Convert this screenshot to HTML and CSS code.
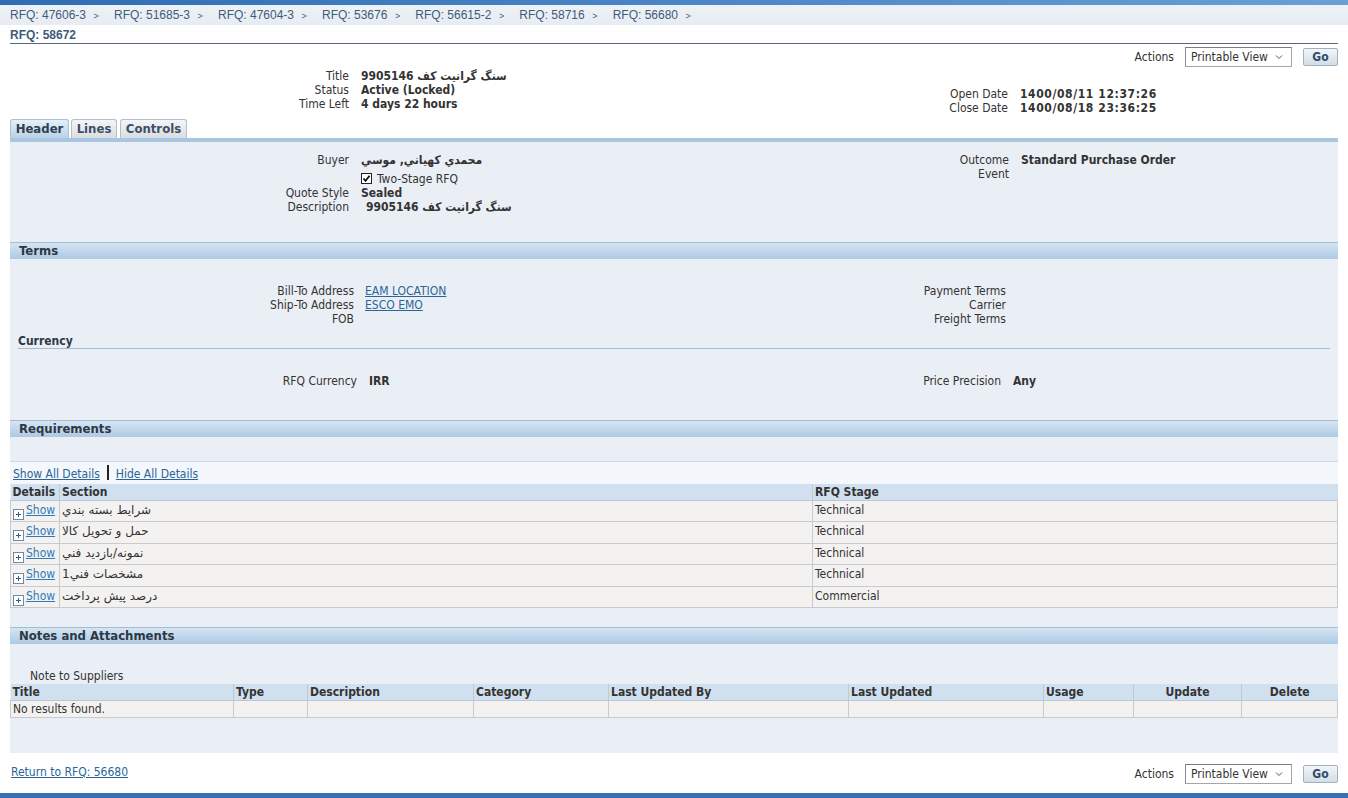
FILE: index.html
```html
<!DOCTYPE html>
<html>
<head>
<meta charset="utf-8">
<title>RFQ: 58672</title>
<link rel="stylesheet" href="styles.css">
</head>
<body>
<div class="topbar"></div>
<div class="crumbs">
  <a class="crumb">RFQ: 47606-3</a>
  <a class="crumb">RFQ: 51685-3</a>
  <a class="crumb">RFQ: 47604-3</a>
  <a class="crumb">RFQ: 53676</a>
  <a class="crumb">RFQ: 56615-2</a>
  <a class="crumb">RFQ: 58716</a>
  <a class="crumb">RFQ: 56680</a>
</div>
<div class="page">
  <div class="pagetitle">RFQ: 58672</div>
  <div class="actions">
    <span class="actions-label">Actions</span>
    <div class="select"><span>Printable View</span><svg class="chev" width="8" height="6" viewBox="0 0 8 6"><path d="M1 1.5 L4 4.5 L7 1.5" fill="none" stroke="#555" stroke-width="1"/></svg></div>
    <button class="go">Go</button>
  </div>

  <div class="info">
    <div class="form form-top-left">
      <span class="lbl">Title</span><span class="val">سنگ گرانیت کف 9905146</span>
      <span class="lbl">Status</span><span class="val">Active (Locked)</span>
      <span class="lbl">Time Left</span><span class="val">4 days 22 hours</span>
    </div>
    <div class="form form-top-right">
      <span class="lbl">Open Date</span><span class="val num">1400/08/11 12:37:26</span>
      <span class="lbl">Close Date</span><span class="val num">1400/08/18 23:36:25</span>
    </div>
  </div>

  <div class="tabs">
    <div class="tab tab-active tab-header">Header</div>
    <div class="tab tab-lines">Lines</div>
    <div class="tab tab-controls">Controls</div>
  </div>

  <div class="panel">
    <div class="header-sec">
      <div class="form form-hl">
        <span class="lbl">Buyer</span><span class="val">محمدي كهياني, موسي</span>
        <span class="lbl"></span><span class="chkrow"><span class="chk"><svg width="9" height="9" viewBox="0 0 9 9"><path d="M1.5 4.5 L3.5 6.8 L7.6 1.8" fill="none" stroke="#111" stroke-width="1.8"/></svg></span>Two-Stage RFQ</span>
        <span class="lbl">Quote Style</span><span class="val">Sealed</span>
        <span class="lbl">Description</span><span class="val val-desc">سنگ گرانیت کف 9905146</span>
      </div>
      <div class="form form-hr">
        <span class="lbl">Outcome</span><span class="val">Standard Purchase Order</span>
        <span class="lbl">Event</span><span class="val"></span>
      </div>
    </div>

    <div class="sechead">Terms</div>
    <div class="terms">
      <div class="form form-tl">
        <span class="lbl">Bill-To Address</span><a class="link">EAM LOCATION</a>
        <span class="lbl">Ship-To Address</span><a class="link">ESCO EMO</a>
        <span class="lbl">FOB</span><span class="val"></span>
      </div>
      <div class="form form-tr">
        <span class="lbl">Payment Terms</span><span class="val"></span>
        <span class="lbl">Carrier</span><span class="val"></span>
        <span class="lbl">Freight Terms</span><span class="val"></span>
      </div>
    </div>
    <div class="subhead">Currency</div>
    <div class="currency">
      <div class="form form-cl">
        <span class="lbl">RFQ Currency</span><span class="val">IRR</span>
      </div>
      <div class="form form-cr">
        <span class="lbl">Price Precision</span><span class="val">Any</span>
      </div>
    </div>

    <div class="sechead">Requirements</div>
    <div class="showall"><a class="link">Show All Details</a><span class="sep"></span><a class="link">Hide All Details</a></div>
    <table class="grid req">
      <colgroup><col class="c-det"><col class="c-sec"><col></colgroup>
      <thead><tr><th>Details</th><th>Section</th><th>RFQ Stage</th></tr></thead>
      <tbody>
        <tr><td><span class="plus"></span><a class="show">Show</a></td><td class="fa">شرايط بسته بندي</td><td>Technical</td></tr>
        <tr><td><span class="plus"></span><a class="show">Show</a></td><td class="fa">حمل و تحويل كالا</td><td>Technical</td></tr>
        <tr><td><span class="plus"></span><a class="show">Show</a></td><td class="fa">نمونه/بازديد فني</td><td>Technical</td></tr>
        <tr><td><span class="plus"></span><a class="show">Show</a></td><td class="fa">مشخصات فني1</td><td>Technical</td></tr>
        <tr><td><span class="plus"></span><a class="show">Show</a></td><td class="fa">درصد پيش پرداخت</td><td>Commercial</td></tr>
      </tbody>
    </table>

    <div class="sechead sechead-notes">Notes and Attachments</div>
    <div class="note-label">Note to Suppliers</div>
    <table class="grid notes">
      <colgroup><col class="n1"><col class="n2"><col class="n3"><col class="n4"><col class="n5"><col class="n6"><col class="n7"><col class="n8"><col></colgroup>
      <thead><tr><th>Title</th><th>Type</th><th>Description</th><th>Category</th><th>Last Updated By</th><th>Last Updated</th><th>Usage</th><th class="ctr">Update</th><th class="ctr">Delete</th></tr></thead>
      <tbody><tr><td>No results found.</td><td></td><td></td><td></td><td></td><td></td><td></td><td></td><td></td></tr></tbody>
    </table>
  </div>

  <div class="footer">
    <a class="link">Return to RFQ: 56680</a>
    <div class="actions actions-bottom">
      <span class="actions-label">Actions</span>
      <div class="select"><span>Printable View</span><svg class="chev" width="8" height="6" viewBox="0 0 8 6"><path d="M1 1.5 L4 4.5 L7 1.5" fill="none" stroke="#555" stroke-width="1"/></svg></div>
      <button class="go">Go</button>
    </div>
  </div>
</div>
<div class="bottombar"></div>
</body>
</html>
```
FILE: styles.css
```css
* { box-sizing: border-box; }
body {
  margin: 0;
  font-family: Tahoma, "DejaVu Sans Condensed", "DejaVu Sans", sans-serif;
  font-size: 12px;
  line-height: 14px;
  color: #333;
  background: #fff;
}
a { cursor: pointer; }
.topbar {
  height: 5px;
  background: linear-gradient(90deg, #2f6cb4 0%, #4a85c6 50%, #6aa0d6 100%);
}
.crumbs {
  display: flex;
  align-items: center;
  height: 20px;
  padding: 1px 0 0 10px;
  background: linear-gradient(#eef2f7, #e6ecf2);
  font-family: "Liberation Sans", Arial, sans-serif;
  font-size: 12px;
  color: #3d5b7b;
}
.crumb { margin-right: 15.2px; white-space: nowrap; }
.crumb::after { content: ">"; font-size: 9px; margin-left: 7.5px; }
.page { padding: 0 10px; }
.pagetitle {
  font-family: "Liberation Sans", Arial, sans-serif;
  font-weight: bold;
  font-size: 12px;
  color: #3d5b7b;
  padding-top: 3px;
  height: 19px;
  border-bottom: 1px solid #566a7c;
}
.actions {
  display: flex;
  justify-content: flex-end;
  align-items: center;
  margin-top: 3px;
  height: 20px;
}
.actions-label { margin-right: 11px; color: #333; }
.select {
  width: 107px;
  height: 20px;
  border: 1px solid #a6a6a6;
  border-top-color: #7c7c7c;
  border-left-color: #8c8c8c;
  background: #fff;
  display: flex;
  align-items: center;
  justify-content: space-between;
  padding: 0 8px 0 5px;
  color: #333;
}
.chev { display: block; }
.go {
  margin-left: 11px;
  width: 35px;
  height: 18px;
  padding: 0;
  font-family: inherit;
  font-weight: bold;
  font-size: 12px;
  color: #2d4d6d;
  border: 1px solid #9fb0bf;
  border-radius: 2px;
  background: linear-gradient(#f3f6f9, #d2dde7);
}
.form {
  display: grid;
  column-gap: 12px;
  grid-auto-rows: 14px;
  align-content: start;
}
.form .lbl { text-align: right; color: #333; white-space: nowrap; }
.form .val { font-weight: bold; color: #333; white-space: nowrap; }
.form .num { letter-spacing: 0.6px; }
.info { display: flex; margin-top: 2px; height: 50px; }
.form-top-left { grid-template-columns: 339px auto; width: 650px; }
.form-top-right { grid-template-columns: 348px auto; padding-top: 18px; }
.tabs {
  display: flex;
  height: 19px;
}
.tab {
  height: 19px;
  font-weight: bold;
  font-size: 13px;
  line-height: 18px;
  text-align: center;
  color: #3c5068;
  border: 1px solid #b4bfca;
  border-bottom: none;
  border-radius: 3px 3px 0 0;
  background: linear-gradient(#f4f5f6, #d9dee3);
}
.tab-header { width: 59px; margin-right: 2px; }
.tab-lines { width: 46px; margin-right: 3px; }
.tab-controls { width: 67px; }
.tab-active {
  color: #2f3f4f;
  border-color: #a8c2da;
  background: linear-gradient(#e6eff7, #b9d2e8);
}
.panel {
  background: #eaeff5;
  border-top: 4px solid #a9c5df;
  padding-bottom: 35px;
}
.header-sec { display: flex; padding-top: 11px; height: 100px; }
.form-hl { grid-template-columns: 339px auto; width: 650px; grid-template-rows: 14px 19px 14px 14px; }
.form-hr { grid-template-columns: 349px auto; }
.chkrow { display: flex; align-items: center; padding-top: 4px; color: #333; }
.chk {
  width: 11px; height: 11px;
  border: 1px solid #222;
  background: #fff;
  display: inline-flex;
  align-items: center;
  justify-content: center;
  margin-right: 5px;
}
.val-desc { padding-left: 5px; }
.sechead {
  height: 17px;
  border-top: 1px solid #9fbdd9;
  background: linear-gradient(#d6e5f2, #adc9e3);
  font-weight: bold;
  font-size: 13px;
  line-height: 16px;
  padding-left: 9px;
  color: #2c3845;
}
.terms { display: flex; padding-top: 25px; }
.form-tl { grid-template-columns: 344px auto; column-gap: 11px; width: 650px; }
.form-tr { grid-template-columns: 346px auto; }
.link { color: #2a6597; text-decoration: underline; white-space: nowrap; }
.subhead {
  margin: 8px 8px 0 8px;
  height: 15px;
  font-weight: bold;
  color: #2c3845;
  border-bottom: 1px solid #a3bdd5;
}
.currency { display: flex; padding-top: 25px; height: 71px; }
.form-cl { grid-template-columns: 347px auto; width: 650px; }
.form-cr { grid-template-columns: 341px auto; }
.showall {
  margin-top: 24px;
  height: 23px;
  display: flex;
  align-items: flex-end;
  padding: 0 0 3px 3px;
  background: #f4f7fb;
  border-top: 1px solid #cbdaea;
}
.sep {
  display: inline-block;
  width: 2px;
  height: 15px;
  background: #222;
  margin: 0 7px 1px 7px;
}
table.grid {
  width: 100%;
  border-collapse: collapse;
  table-layout: fixed;
}
.grid th {
  background: #d0e0ef;
  text-align: left;
  font-weight: bold;
  color: #333;
  padding: 0 2px;
  height: 16px;
  border-left: 1px solid #bccbda;
  border-bottom: 1px solid #b9c8d7;
  line-height: 14px;
  white-space: nowrap;
}
.grid th:first-child { border-left: none; }
.grid th.ctr { text-align: center; }
.grid td {
  background: #f3f2f1;
  border: 1px solid #c6cbd0;
  border-top: none;
  vertical-align: top;
  padding: 2px 2px 0 2px;
  white-space: nowrap;
  overflow: hidden;
}
.req .c-det { width: 49px; }
.req .c-sec { width: 753px; }
.req tr:nth-child(odd) td { height: 21px; }
.req tr:nth-child(even) td { height: 22px; }
.fa { font-family: Tahoma, "DejaVu Sans", sans-serif; }
.plus {
  display: inline-block;
  width: 11px;
  height: 11px;
  border: 1px solid #6f8aa5;
  background: #fff;
  vertical-align: -6px;
  margin-right: 2px;
  position: relative;
}
.plus::before, .plus::after {
  content: "";
  position: absolute;
  background: #3b5d7f;
}
.plus::before { left: 2px; right: 2px; top: 4px; height: 1px; }
.plus::after { top: 2px; bottom: 2px; left: 4px; width: 1px; }
.show { color: #2f79b9; text-decoration: underline; }
.sechead-notes { margin-top: 19px; }
.note-label { padding: 25px 0 0 20px; height: 40px; color: #333; }
.notes .n1 { width: 223px; }
.notes .n2 { width: 74px; }
.notes .n3 { width: 166px; }
.notes .n4 { width: 135px; }
.notes .n5 { width: 240px; }
.notes .n6 { width: 195px; }
.notes .n7 { width: 90px; }
.notes .n8 { width: 108px; }
.notes th { height: 17px; }
.notes td { height: 17px; padding-top: 1px; }
.footer {
  display: flex;
  justify-content: space-between;
  align-items: flex-start;
  padding-top: 11px;
  height: 40px;
}
.footer > .link { margin-top: 1px; padding-left: 1px; }
.actions-bottom { margin-top: 0; }
.bottombar {
  height: 30px;
  background: linear-gradient(#3a72b9, #2e66ad);
}
```
